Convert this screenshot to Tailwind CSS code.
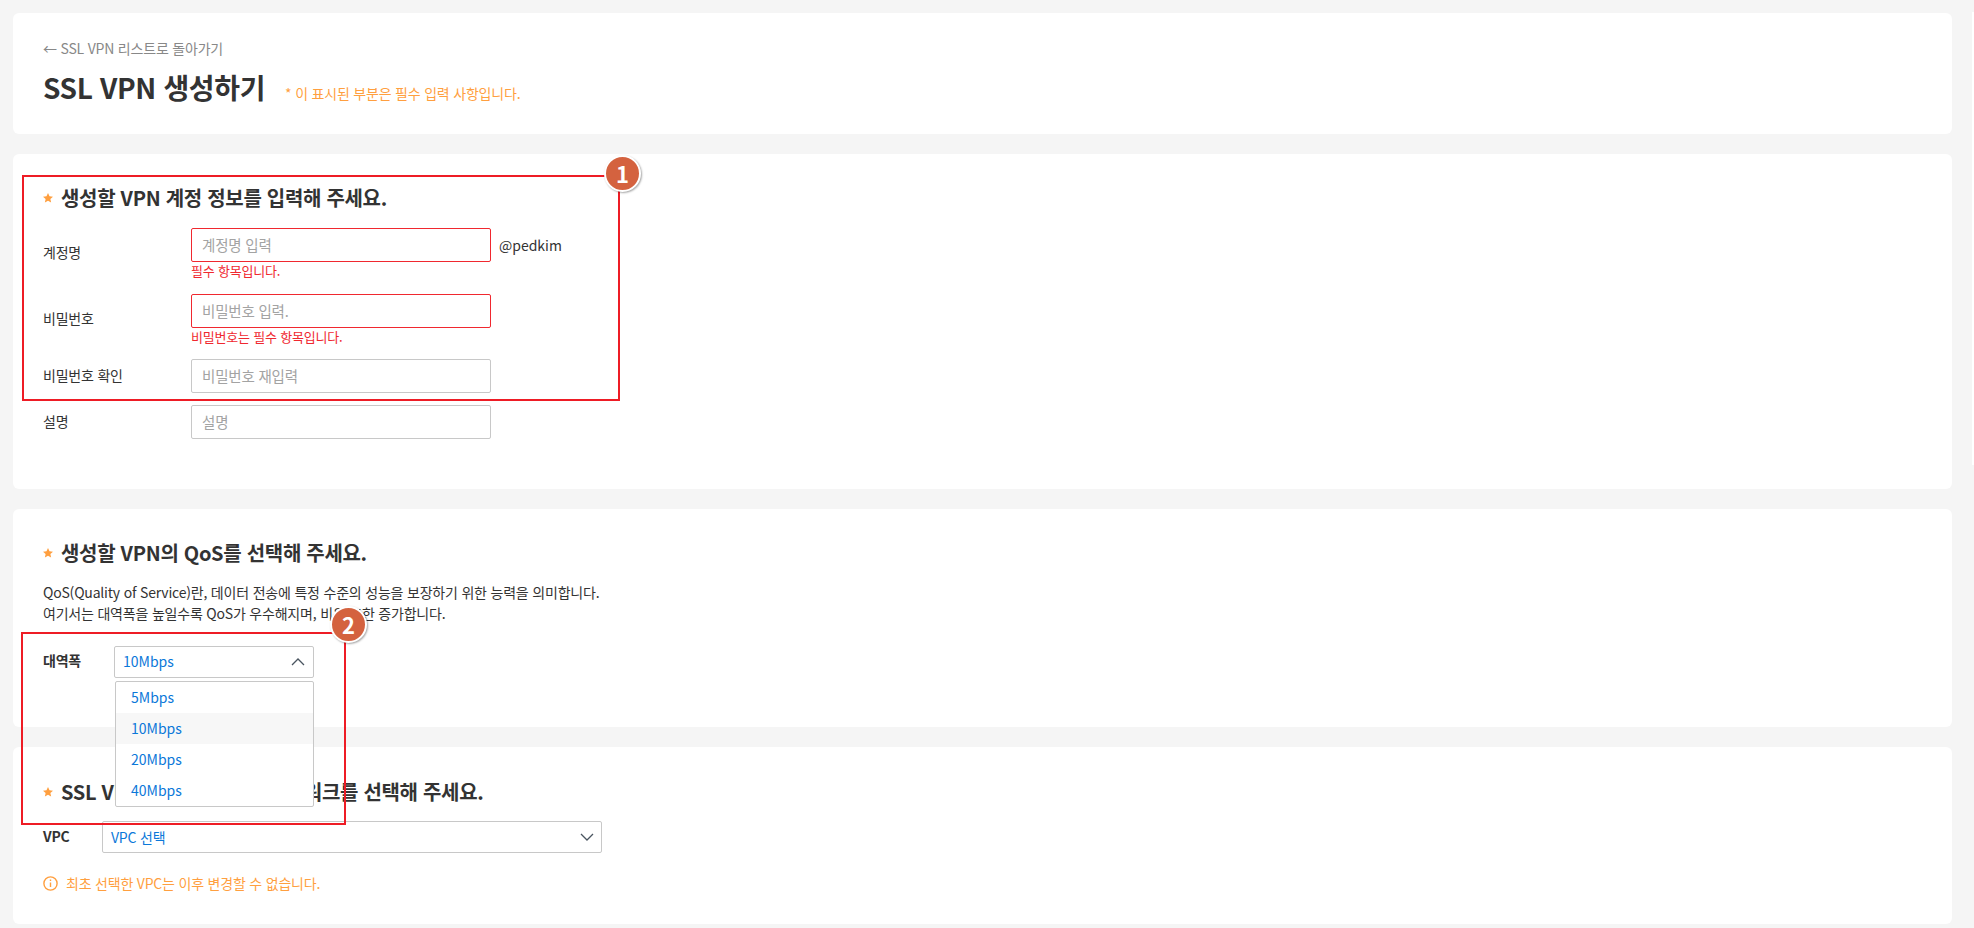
<!DOCTYPE html>
<html lang="ko">
<head>
    <meta charset="UTF-8">
    <title>SSL VPN 생성하기</title>
    <script src="https://cdn.jsdelivr.net/npm/@tailwindcss/browser@4"></script>
</head>
<body class="bg-[#f5f5f5] font-['Noto_Sans_CJK_KR','Noto_Sans',sans-serif] text-[#333] tracking-[-0.2px] overflow-hidden">
    <div class="relative h-[928px] w-[1974px]">
        <!-- right scroll track -->
        <div class="absolute right-0 top-[12px] h-[453px] w-[2px] bg-white"></div>

        <main class="flex flex-col gap-[20px] pl-[13px] pr-[22px] pt-[13px]">
            <!-- page title -->
            <section class="h-[121px] rounded-md bg-white pl-[30px] pt-[25px]">
                <a class="flex h-[20px] items-center text-[14px] text-[#888]">← SSL VPN 리스트로 돌아가기</a>
                <div class="mt-[9px] flex items-baseline">
                    <h1 class="text-[28px] font-bold leading-[40px] tracking-[-0.35px] text-[#333]">SSL VPN 생성하기</h1>
                    <span class="ml-[20px] text-[14px] text-[#ff9f3f]">* 이 표시된 부분은 필수 입력 사항입니다.</span>
                </div>
            </section>

            <!-- account -->
            <section class="h-[335px] rounded-md bg-white pl-[30px] pt-[30px]">
                <h2 class="flex h-[28px] items-center text-[20px] font-bold tracking-[-0.3px] text-[#333]">
                    <svg class="mr-[8px] h-[10px] w-[10px]" viewBox="0 0 24 24" fill="#ff9f3f"><path d="M12 0l3.6 8 8.4.9-6.3 5.7 1.8 8.4L12 18.700l-7.500 4.300 1.800-8.400L0 8.900 8.400 8z"/></svg>
                    생성할 VPN 계정 정보를 입력해 주세요.
                </h2>
                <div class="mt-[16px] flex flex-col">
                    <div class="flex h-[50px] items-center">
                        <label class="w-[148px] pb-[2px] text-[14px]">계정명</label>
                        <div class="flex flex-col self-start">
                            <div class="flex items-center">
                                <input class="h-[34px] w-[300px] rounded-[2px] border border-[#f0282f] px-[10px] pb-[2px] text-[14.5px] placeholder:text-[#a3a3a3]" placeholder="계정명 입력">
                                <span class="ml-[8px] text-[14px] tracking-normal">@pedkim</span>
                            </div>
                            <p class="mt-[1px] text-[13px] leading-[16px] text-[#f0282f]">필수 항목입니다.</p>
                        </div>
                    </div>
                    <div class="mt-[16px] flex h-[50px] items-center">
                        <label class="w-[148px] pb-[2px] text-[14px]">비밀번호</label>
                        <div class="flex flex-col self-start">
                            <input class="h-[34px] w-[300px] rounded-[2px] border border-[#f0282f] px-[10px] pb-[2px] text-[14.5px] placeholder:text-[#a3a3a3]" placeholder="비밀번호 입력.">
                            <p class="mt-[1px] text-[13px] leading-[16px] text-[#f0282f]">비밀번호는 필수 항목입니다.</p>
                        </div>
                    </div>
                    <div class="mt-[15px] flex h-[34px] items-center">
                        <label class="w-[148px] pb-[2px] text-[14px]">비밀번호 확인</label>
                        <input class="h-[34px] w-[300px] rounded-[2px] border border-[#c8c8c8] px-[10px] pb-[2px] text-[14.5px] placeholder:text-[#a3a3a3]" placeholder="비밀번호 재입력">
                    </div>
                    <div class="mt-[12px] flex h-[34px] items-center">
                        <label class="w-[148px] pb-[2px] text-[14px]">설명</label>
                        <input class="h-[34px] w-[300px] rounded-[2px] border border-[#c8c8c8] px-[10px] pb-[2px] text-[14.5px] placeholder:text-[#a3a3a3]" placeholder="설명">
                    </div>
                </div>
            </section>

            <!-- qos -->
            <section class="h-[218px] rounded-md bg-white pl-[30px] pt-[30px]">
                <h2 class="flex h-[28px] items-center text-[20px] font-bold tracking-[-0.3px] text-[#333]">
                    <svg class="mr-[8px] h-[10px] w-[10px]" viewBox="0 0 24 24" fill="#ff9f3f"><path d="M12 0l3.6 8 8.4.9-6.3 5.7 1.8 8.4L12 18.700l-7.500 4.300 1.800-8.400L0 8.900 8.400 8z"/></svg>
                    생성할 VPN의 QoS를 선택해 주세요.
                </h2>
                <p class="mt-[15px] text-[14px] leading-[21px]">QoS(Quality of Service)란, 데이터 전송에 특정 수준의 성능을 보장하기 위한 능력을 의미합니다.<br>여기서는 대역폭을 높일수록 QoS가 우수해지며, 비용 또한 증가합니다.</p>
                <div class="mt-[22px] flex items-center">
                    <span class="w-[71px] pb-[3px] text-[14px] font-bold">대역폭</span>
                    <div class="flex h-[32px] w-[200px] items-center justify-between rounded-[2px] border border-[#c8c8c8] pl-[8px] pr-[7px]">
                        <span class="pb-[1px] text-[14px] tracking-normal text-[#0b78d9]">10Mbps</span>
                        <svg class="h-[16px] w-[16px]" viewBox="0 0 16 16" fill="none" stroke="#4a5560" stroke-width="1.3"><path d="M2 11l6-6 6 6"/></svg>
                    </div>
                </div>
            </section>

            <!-- network -->
            <section class="h-[177px] rounded-md bg-white pl-[30px] pt-[31px]">
                <h2 class="flex h-[28px] items-center text-[20px] font-bold tracking-[-0.3px] text-[#333]">
                    <svg class="mr-[8px] h-[10px] w-[10px]" viewBox="0 0 24 24" fill="#ff9f3f"><path d="M12 0l3.6 8 8.4.9-6.3 5.7 1.8 8.4L12 18.700l-7.500 4.300 1.800-8.400L0 8.900 8.400 8z"/></svg>
                    SSL VPN에 연결할 VPC 네트워크를 선택해 주세요.
                </h2>
                <div class="mt-[15px] flex items-center">
                    <span class="w-[59px] pb-[2px] text-[14px] font-bold">VPC</span>
                    <div class="flex h-[32px] w-[500px] items-center justify-between rounded-[2px] border border-[#c8c8c8] pl-[8px] pr-[6px]">
                        <span class="text-[14px] text-[#0b78d9]">VPC 선택</span>
                        <svg class="h-[16px] w-[16px]" viewBox="0 0 16 16" fill="none" stroke="#4a5560" stroke-width="1.3"><path d="M2 5l6 6 6-6"/></svg>
                    </div>
                </div>
                <div class="mt-[20px] flex items-center gap-[8px] text-[14px] text-[#ff9f3f]">
                    <svg class="h-[15px] w-[15px]" viewBox="0 0 15 15" fill="none" stroke="#ff9f3f" stroke-width="1.4"><circle cx="7.500" cy="7.500" r="6.600"/><path d="M7.500 6.500v4.500M7.500 3.500v1.500"/></svg>
                    최초 선택한 VPC는 이후 변경할 수 없습니다.
                </div>
            </section>
        </main>

        <!-- open dropdown -->
        <ul class="absolute left-[115px] top-[681px] h-[126px] w-[199px] rounded-[2px] border border-[#c8c8c8] bg-white text-[14px] tracking-normal text-[#0b78d9]">
            <li class="flex h-[31px] items-center pl-[15px]">5Mbps</li>
            <li class="flex h-[31px] items-center bg-[#f7f7f7] pl-[15px]">10Mbps</li>
            <li class="flex h-[31px] items-center pl-[15px]">20Mbps</li>
            <li class="flex h-[31px] items-center pl-[15px]">40Mbps</li>
        </ul>

        <!-- annotations -->
        <div class="absolute left-[22px] top-[175px] h-[226px] w-[598px] border-2 border-[#ee1c25]"></div>
        <div class="absolute left-[21px] top-[632px] h-[193px] w-[325px] border-2 border-[#ee1c25]"></div>
        <div class="absolute left-[604px] top-[155px] flex h-[37px] w-[37px] items-center justify-center rounded-full border-2 border-white bg-[#d4623f] text-[22px] font-bold tracking-normal text-white shadow-[1px_1px_2px_rgba(0,0,0,0.35)]">1</div>
        <div class="absolute left-[330px] top-[606px] flex h-[37px] w-[37px] items-center justify-center rounded-full border-2 border-white bg-[#d4623f] text-[22px] font-bold tracking-normal text-white shadow-[1px_1px_2px_rgba(0,0,0,0.35)]">2</div>
    </div>
</body>
</html>
